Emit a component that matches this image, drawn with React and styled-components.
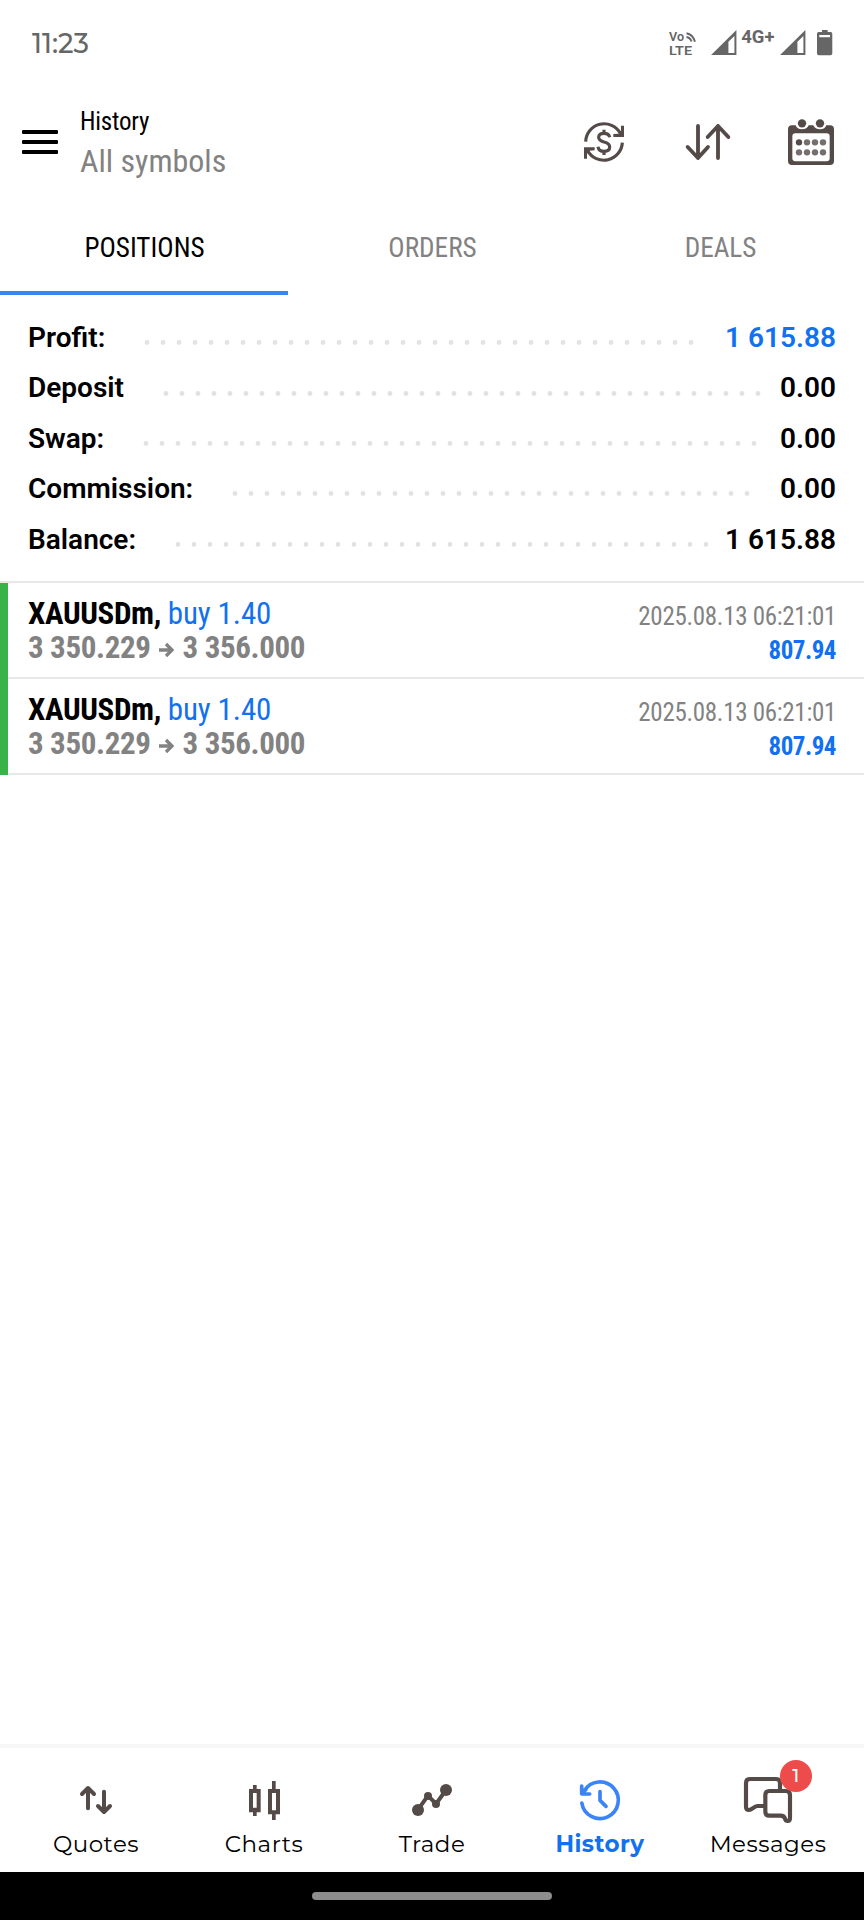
import React from 'react';

import styled, { createGlobalStyle, css } from 'styled-components';

const colors = {
	page: '#ffffff',
	text: '#000000',
	muted: '#828282',
	status: '#666666',
	icon: '#544a48',
	blue: '#1271ee',
	accent: '#3a84f7',
	green: '#37b34a',
	divider: '#e8e8e8',
	badge: '#ee4b4b',
};

const GlobalStyle = createGlobalStyle`
	* {
		box-sizing: border-box;
	}
	body {
		margin: 0;
		background: ${colors.page};
		color: ${colors.text};
		font-family: Roboto, sans-serif;
	}
`;

const condensed = css`
	font-family: 'Roboto Condensed', Roboto, sans-serif;
	font-stretch: 75%;
`;

const Screen = styled.div`
	display: flex;
	flex-direction: column;
	width: 864px;
	height: 1920px;
	background: ${colors.page};
	overflow: hidden;
`;

const Icon = styled.svg`
	display: block;
	flex: none;
	width: ${({ $w }) => $w}px;
	height: ${({ $h }) => $h}px;
	color: ${({ $color }) => $color || colors.icon};
	overflow: visible;
`;

/* Status bar */

const StatusBar = styled.div`
	display: flex;
	align-items: flex-start;
	justify-content: space-between;
	height: 88px;
	padding: 26px 32px 0 32px;
`;

const Clock = styled.div`
	font: 500 27px/36px Montserrat, sans-serif;
	color: ${colors.status};
`;

const StatusIcons = styled.div`
	display: flex;
	align-items: flex-start;
	padding-top: 4px;
`;

const NetworkType = styled.span`
	width: 34px;
	margin: 0 5px 0 5px;
	font: 700 18.5px/15px Roboto, sans-serif;
	color: ${colors.status};
`;

const Gap = styled.span`
	width: ${({ $w }) => $w}px;
`;

/* Header */

const Header = styled.header`
	display: flex;
	align-items: center;
	height: 108px;
	padding: 0 30px 0 22px;
`;

const MenuButton = styled.button`
	display: flex;
	flex-direction: column;
	gap: 6px;
	width: 36px;
	padding: 0;
	border: 0;
	background: none;
`;

const MenuBar = styled.span`
	height: 4px;
	border-radius: 1px;
	background: ${colors.text};
`;

const Titles = styled.div`
	display: flex;
	flex: 1;
	flex-direction: column;
	margin: 4px 0 0 22px;
`;

const Title = styled.span`
	${condensed}
	font-size: 25px;
	letter-spacing: -0.2px;
	line-height: 34px;
`;

const Subtitle = styled.span`
	${condensed}
	font-size: 32px;
	line-height: 45px;
	color: ${colors.muted};
`;

const Actions = styled.div`
	display: flex;
	align-items: center;
	gap: 60px;
	height: 46px;
	margin-bottom: 1px;
`;

/* Tabs */

const Tabs = styled.nav`
	display: grid;
	grid-template-columns: repeat(3, 1fr);
	height: 99px;
`;

const Tab = styled.a`
	${condensed}
	display: flex;
	align-items: center;
	justify-content: center;
	padding: 8px 0 0 1px;
	border-bottom: 4px solid ${({ $active }) => ($active ? colors.accent : 'transparent')};
	font-size: 27.2px;
	color: ${({ $active }) => ($active ? colors.text : colors.muted)};
`;

/* Summary */

const Summary = styled.section`
	display: flex;
	flex-direction: column;
	height: 288px;
	padding: 18px 28px 0;
	border-bottom: 2px solid ${colors.divider};
`;

const SummaryRow = styled.div`
	display: flex;
	flex: none;
	height: 50.4px;
	font-size: 28px;
	font-weight: 600;
	line-height: 50px;
`;

const SummaryValue = styled.span`
	color: ${({ $blue }) => ($blue ? colors.blue : colors.text)};
`;

const Leader = styled.svg`
	flex: 1;
	align-self: center;
	height: 5px;
	margin: 9px 18.3px 0 42px;
	overflow: visible;
	stroke: #e2e2e2;
`;

/* Position list */

const Positions = styled.section`
	flex: 1;
	min-height: 0;
`;

const PositionGroup = styled.div`
	border-left: 8px solid ${colors.green};
`;

const PositionRow = styled.div`
	${condensed}
	display: flex;
	justify-content: space-between;
	height: 96px;
	padding: 14px 28px 0 20px;
	border-bottom: 2px solid ${colors.divider};
`;

const Deal = styled.div`
	display: flex;
	flex-direction: column;
	font-size: 31px;
	letter-spacing: -0.36px;
	line-height: 34px;
`;

const Result = styled.div`
	display: flex;
	flex-direction: column;
	align-items: flex-end;
	padding-top: 3px;
	font-size: 25px;
	letter-spacing: -0.3px;
	line-height: 34px;
`;

const Symbol = styled.b`
	font-weight: 700;
`;

const Side = styled.span`
	letter-spacing: -0.1px;
	color: ${colors.blue};
`;

const Prices = styled.span`
	display: flex;
	align-items: center;
	gap: 8px;
	font-weight: 700;
	color: ${colors.muted};
`;

const Time = styled.span`
	color: ${colors.muted};
`;

const Profit = styled.b`
	font-weight: 700;
	letter-spacing: -0.5px;
	color: ${colors.blue};
`;

/* Bottom navigation */

const BottomNav = styled.nav`
	display: grid;
	grid-template-columns: repeat(5, 168px);
	justify-content: center;
	height: 128px;
	border-top: 4px solid #f7f7f7;
`;

const NavItem = styled.a`
	display: flex;
	flex-direction: column;
	align-items: center;
	padding-top: 28px;
	font: ${({ $active }) => ($active ? 700 : 400)} 23px/30px Montserrat, sans-serif;
	letter-spacing: ${({ $active }) => ($active ? 0.4 : 0.5)}px;
	color: ${({ $active }) => ($active ? colors.blue : colors.text)};
`;

const NavIcon = styled.div`
	position: relative;
	display: flex;
	align-items: center;
	justify-content: center;
	height: 48px;
	margin-bottom: 5px;
`;

const Badge = styled.span`
	position: absolute;
	top: -16px;
	right: -20px;
	display: grid;
	place-items: center;
	width: 32px;
	height: 32px;
	border-radius: 50%;
	background: ${colors.badge};
	font: 500 19px/32px Montserrat, sans-serif;
	color: #ffffff;
`;

const GestureBar = styled.div`
	display: flex;
	justify-content: center;
	height: 48px;
	padding-top: 20px;
	background: #000000;
`;

const GesturePill = styled.div`
	width: 240px;
	height: 8px;
	border-radius: 4px;
	background: #8d8d8d;
`;

const VolteIcon = () => (
	<Icon $w={27} $h={26} $color={colors.status} viewBox='0 0 27 26' fill='currentColor'>
		<g fontFamily='Roboto, sans-serif' fontWeight='600' fontSize='13'>
			<text x='0' y='11' textLength='15' lengthAdjust='spacingAndGlyphs'>Vo</text>
			<text x='0' y='24.700' textLength='23' lengthAdjust='spacingAndGlyphs'>LTE</text>
		</g>
		<path d='M17.500 3.200Q24 4.500 26 11.800M17.500 7Q21 7.500 22.600 11.500' fill='none' stroke='currentColor' strokeWidth='1.900' />
	</Icon>
);

const SignalIcon = () => (
	<Icon $w={25.5} $h={25} $color={colors.status} viewBox='0 0 76 75' fill='currentColor'>
		<path fillRule='evenodd' d='M76 0V75H0ZM52 35V69H70V18Z' />
	</Icon>
);

const BatteryIcon = () => (
	<Icon $w={15.3} $h={25.3} $color={colors.status} viewBox='0 0 46 76' fill='currentColor'>
		<path fillRule='evenodd' d='M15 0H32V6H41Q46 6 46 11V71Q46 76 41 76H5Q0 76 0 71V11Q0 6 5 6H15ZM7 15V22H39V15Z' />
	</Icon>
);

const CurrencyIcon = () => (
	<Icon $w={40} $h={40} viewBox='72 366 120 120' fill='none' stroke='currentColor' strokeWidth='9.500'>
		<path d='M77 425A55.500 55.500 0 0 1 181 400M187 428A55.500 55.500 0 0 1 83 452' />
		<path d='M192 377V411H160V402L176 401L183 392V377ZM72 476V442H104V451L88 452L81 461V476Z' fill='currentColor' stroke='none' />
		<path d='M132 389V400M132 453V465M149 412Q147 400 132 400Q116 400 116 412Q116 422 132 426Q149 430 149 441Q149 454 132 454Q116 454 114 440' />
	</Icon>
);

const SortIcon = () => (
	<Icon $w={44} $h={36} viewBox='372 373 132 108' fill='none' stroke='currentColor' strokeWidth='11.500' strokeLinecap='round' strokeLinejoin='round'>
		<path d='M414 379V475M383 442L414 475L444 442M474 475V379M443 412L474 379L505 412' />
	</Icon>
);

const CalendarIcon = () => (
	<Icon $w={46} $h={46} viewBox='684 354 138 138' fill='currentColor'>
		<path fillRule='evenodd' d='M696 373H707Q711 385 726 385Q741 385 746 373H760Q765 385 780 385Q795 385 799 373H810Q822 373 822 385V480Q822 492 810 492H696Q684 492 684 480V385Q684 373 696 373ZM706 397Q697 397 697 406V472Q697 481 706 481H800Q809 481 809 472V406Q809 397 800 397Z' />
		<circle cx='726' cy='367' r='12.500' />
		<circle cx='780' cy='367' r='12.500' />
		{[424, 454].map((cy) =>
			[717, 741, 765, 789].map((cx) => (
				<circle key={`${cx}-${cy}`} cx={cx} cy={cy} r='9.500' opacity={cx === 717 && cy === 424 ? 1 : 0.8} />
			))
		)}
	</Icon>
);

const ArrowIcon = () => (
	<Icon $w={16} $h={16} $color={colors.muted} viewBox='0 -2 16 16' fill='none' stroke='currentColor' strokeWidth='3.300'>
		<path d='M0 8H12.500M7 2L13 8L7 14' />
	</Icon>
);

const QuotesIcon = () => (
	<Icon $w={32} $h={28} viewBox='240 168 96 84' fill='none' stroke='currentColor' strokeWidth='12' strokeLinecap='round' strokeLinejoin='round'>
		<path d='M264 175V235M246 192L264 174L282 192M312 185V245M294 228L312 246L330 228' />
	</Icon>
);

const ChartsIcon = () => (
	<Icon $w={31} $h={39} viewBox='746 153 93 117' fill='currentColor'>
		<path fillRule='evenodd' d='M758 165H769V177H781V247H769V258H758V247H746V177H758ZM758 189V233H769V189Z' />
		<path fillRule='evenodd' d='M815 153H826V177H839V253H826V270H815V253H803V177H815ZM815 189V241H827V189Z' />
	</Icon>
);

const TradeIcon = () => (
	<Icon $w={40} $h={32} viewBox='1236 162 120 96' fill='currentColor'>
		<path d='M1254 239L1284 197L1308 222L1338 180' fill='none' stroke='currentColor' strokeWidth='12' />
		<circle cx='1254' cy='240' r='18' />
		<circle cx='1284' cy='198' r='12' />
		<circle cx='1308' cy='222' r='12' />
		<circle cx='1338' cy='180' r='18' />
	</Icon>
);

const HistoryIcon = () => (
	<Icon $w={40} $h={40} $color={colors.accent} viewBox='444 150 120 120' fill='none' stroke='currentColor' strokeWidth='11' strokeLinecap='round' strokeLinejoin='round'>
		<path d='M449.500 219A55 55 0 1 0 457 182M449 168V192H473M450 190L462 178M504 185V211L522 229' />
	</Icon>
);

const MessagesIcon = () => (
	<Icon $w={48} $h={46} viewBox='936 141 144 138' fill='none' stroke='currentColor' strokeWidth='12.500' strokeLinejoin='round'>
		<path d='M996 228H976C966 228 960 240 951 240Q942 240 942 230V159Q942 147 954 147H1032Q1044 147 1044 159V182' />
		<path d='M1012 183H1062Q1074 183 1074 195V264Q1074 273 1067 273Q1061 273 1059 266Q1056 257 1046 257H1012Q1000 257 1000 245V195Q1000 183 1012 183Z' />
	</Icon>
);

const summary = [
	{ label: 'Profit:', value: '1 615.88', blue: true },
	{ label: 'Deposit', value: '0.00' },
	{ label: 'Swap:', value: '0.00' },
	{ label: 'Commission:', value: '0.00' },
	{ label: 'Balance:', value: '1 615.88' },
];

const positions = [
	{ id: 1, symbol: 'XAUUSDm', side: 'buy 1.40', open: '3 350.229', close: '3 356.000', time: '2025.08.13 06:21:01', profit: '807.94' },
	{ id: 2, symbol: 'XAUUSDm', side: 'buy 1.40', open: '3 350.229', close: '3 356.000', time: '2025.08.13 06:21:01', profit: '807.94' },
];

const navItems = [
	{ label: 'Quotes', icon: <QuotesIcon /> },
	{ label: 'Charts', icon: <ChartsIcon /> },
	{ label: 'Trade', icon: <TradeIcon /> },
	{ label: 'History', icon: <HistoryIcon />, active: true },
	{ label: 'Messages', icon: <MessagesIcon />, badge: 1 },
];

export default function App() {
	return (
		<Screen>
			<GlobalStyle />
			<StatusBar>
				<Clock>11:23</Clock>
				<StatusIcons>
					<VolteIcon />
					<Gap $w={15} />
					<SignalIcon />
					<NetworkType>4G+</NetworkType>
					<SignalIcon />
					<Gap $w={11} />
					<BatteryIcon />
				</StatusIcons>
			</StatusBar>

			<Header>
				<MenuButton aria-label='Menu'>
					<MenuBar />
					<MenuBar />
					<MenuBar />
				</MenuButton>
				<Titles>
					<Title>History</Title>
					<Subtitle>All symbols</Subtitle>
				</Titles>
				<Actions>
					<CurrencyIcon />
					<SortIcon />
					<CalendarIcon />
				</Actions>
			</Header>

			<Tabs>
				<Tab $active>POSITIONS</Tab>
				<Tab>ORDERS</Tab>
				<Tab>DEALS</Tab>
			</Tabs>

			<Summary>
				{summary.map(({ label, value, blue }) => (
					<SummaryRow key={label}>
						<span>{label}</span>
						<Leader>
							<line x1='0' x2='100%' y1='2.500' y2='2.500' strokeWidth='4.800' strokeLinecap='round' strokeDasharray='0.010 15.990' />
						</Leader>
						<SummaryValue $blue={blue}>{value}</SummaryValue>
					</SummaryRow>
				))}
			</Summary>

			<Positions>
				<PositionGroup>
					{positions.map((p) => (
						<PositionRow key={p.id}>
							<Deal>
								<span>
									<Symbol>{p.symbol},</Symbol> <Side>{p.side}</Side>
								</span>
								<Prices>
									<span>{p.open}</span>
									<ArrowIcon />
									<span>{p.close}</span>
								</Prices>
							</Deal>
							<Result>
								<Time>{p.time}</Time>
								<Profit>{p.profit}</Profit>
							</Result>
						</PositionRow>
					))}
				</PositionGroup>
			</Positions>

			<BottomNav>
				{navItems.map(({ label, icon, active, badge }) => (
					<NavItem key={label} $active={active}>
						<NavIcon>
							{icon}
							{badge && <Badge>{badge}</Badge>}
						</NavIcon>
						<span>{label}</span>
					</NavItem>
				))}
			</BottomNav>
			<GestureBar>
				<GesturePill />
			</GestureBar>
		</Screen>
	);
}
